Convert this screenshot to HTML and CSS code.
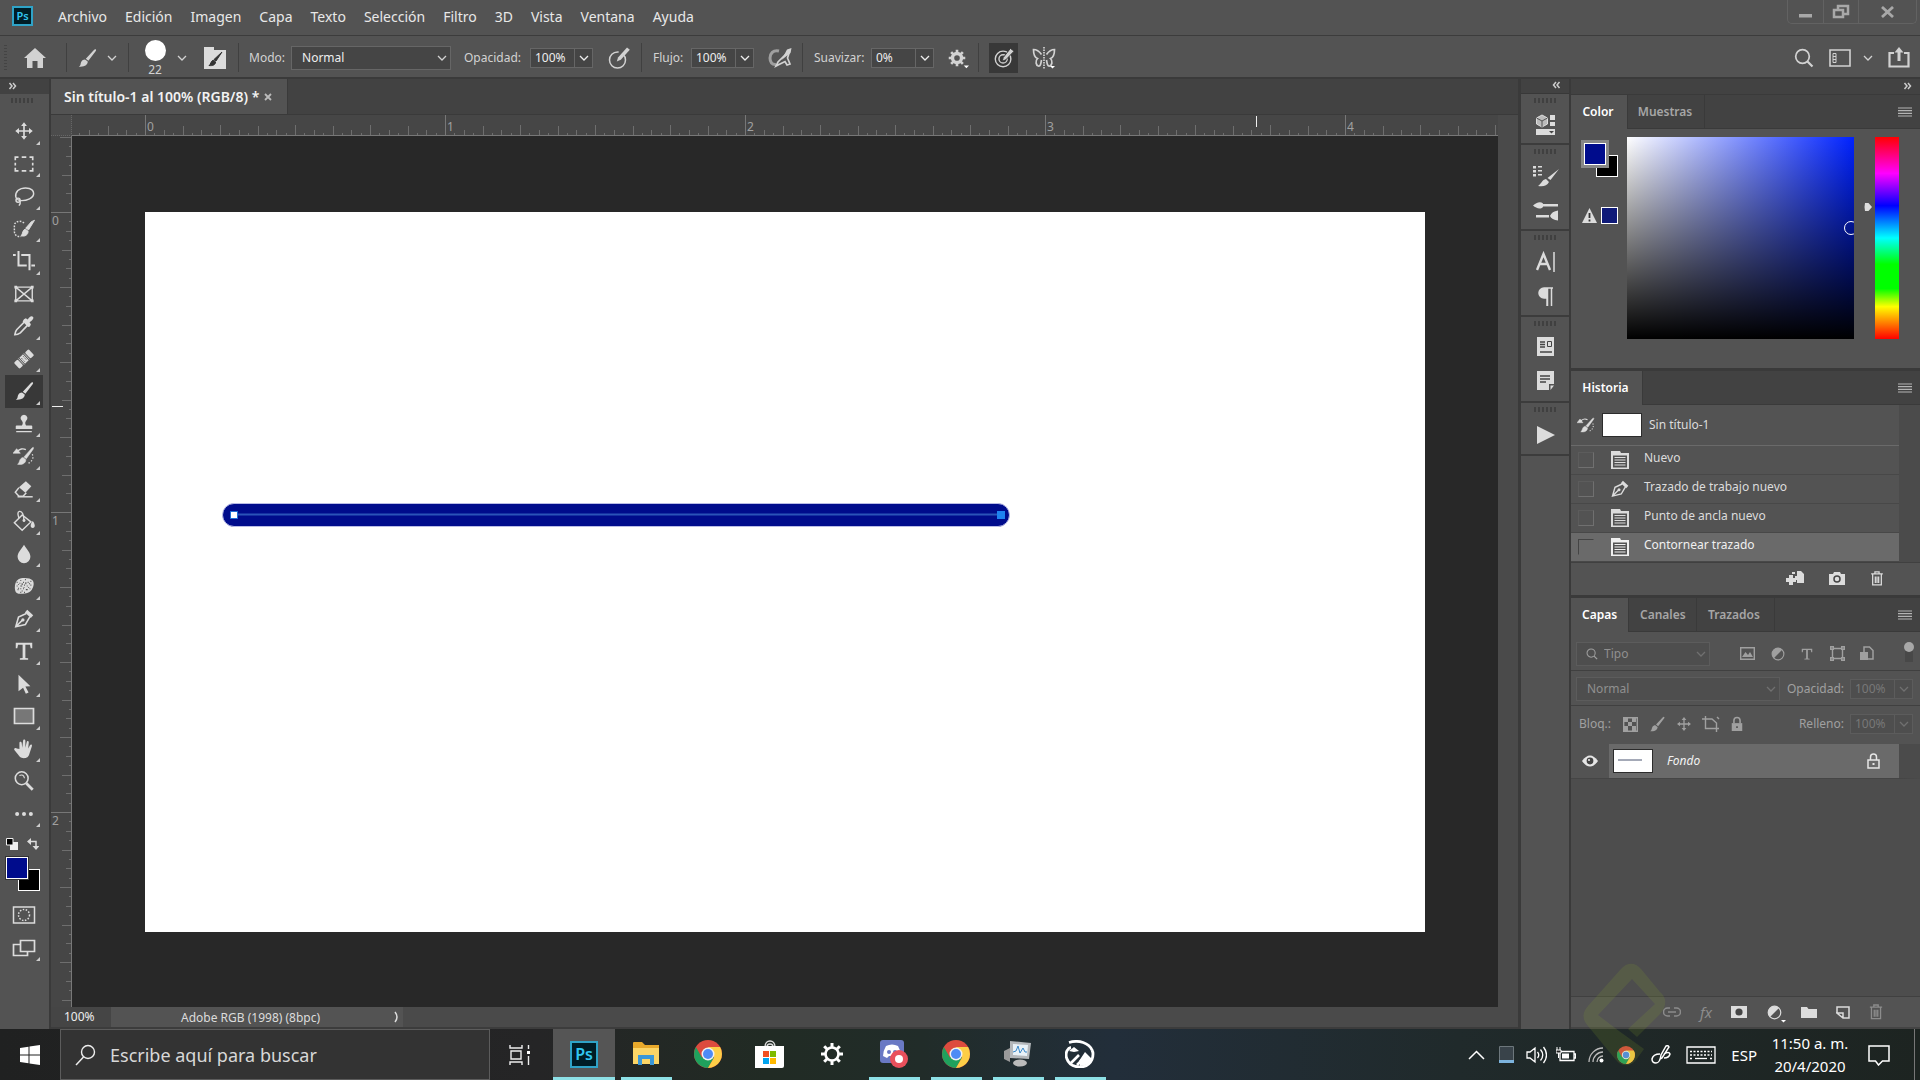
FILE: index.html
```html
<!DOCTYPE html>
<html lang="es">
<head>
<meta charset="utf-8">
<title>Sin título-1 al 100% (RGB/8)</title>
<link rel="stylesheet" href="styles.css">
</head>
<body>
<svg class="sprite" aria-hidden="true">
  <defs>
    <pattern id="ticks-x" x="73" width="75" height="21" patternUnits="userSpaceOnUse">
      <path d="M.5 10V21M9.500 18V21M19.500 15V21M28.500 18V21M38.500 11V21M47.500 18V21M56.500 15V21M66.500 18V21" stroke="#6e6e6e"/>
    </pattern>
    <pattern id="ticks-y" y="76" width="21" height="75" patternUnits="userSpaceOnUse">
      <path d="M9 .5H21M18 9.500H21M15 19.500H21M18 28.500H21M11 38.500H21M18 47.500H21M15 56.500H21M18 66.500H21" stroke="#6e6e6e"/>
    </pattern>
  </defs>
  <symbol id="chev" viewBox="0 0 10 10"><path d="M1 3l4 4 4-4" fill="none" stroke="currentColor" stroke-width="1.300"/></symbol>
  <symbol id="dbl" viewBox="0 0 8 8"><path d="M1 1l2.500 3L1 7M4.500 1L7 4 4.500 7" fill="none" stroke="currentColor" stroke-width="1.500"/></symbol>
  <symbol id="brush" viewBox="0 0 24 24"><path d="M21.500 2.500c.8.6.3 1.500-.1 2.100L13.500 15l-2.800-2.300L19.800 3c.5-.5 1.100-.9 1.700-.5zM9.800 13.500l3 2.400c.2 3.300-3.300 6.300-9.800 5.600 2.500-1.200 1.600-3 2.800-5.400.8-1.700 2.400-2.600 4-2.600z" fill="currentColor"/></symbol>
  <symbol id="move" viewBox="0 0 24 24"><path d="M12 4v16M4 12h16" stroke="currentColor" stroke-width="2"/><path d="M12 1.500l3.500 4.500h-7zM12 22.500L8.500 18h7zM1.500 12L6 8.500v7zM22.500 12L18 15.500v-7z" fill="currentColor"/></symbol>
  <symbol id="marquee" viewBox="0 0 24 24"><path d="M2.500 8V4.500H6M9.500 4.500h5M18 4.500h3.500V8M21.500 10.500v3M21.500 16v3.500H18M14.500 19.500h-5M6 19.500H2.500V16M2.500 13.500v-3" fill="none" stroke="currentColor" stroke-width="1.800"/></symbol>
  <symbol id="lasso" viewBox="0 0 24 24" fill="none" stroke="currentColor" stroke-width="1.600"><path d="M5 16C1 12 3 6 9 4s13 0 13.500 5S15 17.500 8 17"/><circle cx="5.500" cy="16.500" r="2.200"/><path d="M5 16c3 0 4 3 1.500 6.500"/></symbol>
  <symbol id="quick" viewBox="0 0 24 24"><path d="M12 5.500C9 2.500 2 3 1.500 8v7c.5 4.500 4 6 7.500 5" fill="none" stroke="currentColor" stroke-width="1.600" stroke-dasharray="1.800 1.500"/><path d="M23.500 2.500L17 13l-3-2 6-7zM13.500 12l3 2.500c0 4-3.500 6-7.500 5 2-3 1-6 4.500-7.500z" fill="currentColor" stroke="currentColor"/></symbol>
  <symbol id="crop" viewBox="0 0 24 24"><path d="M6 1v16h9M0 5.500h3M9 5.500h9V22M20 17h4" fill="none" stroke="currentColor" stroke-width="2.200"/></symbol>
  <symbol id="frame" viewBox="0 0 24 24"><path d="M3 4.500h18v15H3zM3 4.500l18 15M21 4.500l-18 15" fill="none" stroke="currentColor" stroke-width="1.500"/><path d="M1.500 3h3v3h-3zM19.500 3h3v3h-3zM1.500 18h3v3h-3zM19.500 18h3v3h-3z" fill="currentColor"/></symbol>
  <symbol id="eyedrop" viewBox="0 0 24 24"><path d="M13 7L4 16c-1.500 2-1.500 3-2 5.500C4.500 21.500 6 21 8 19.500l8.500-9" fill="none" stroke="currentColor" stroke-width="1.700"/><path d="M12 4.500l2-1 2 1.500c1.500-2 3-4 5-3.500s2 3-3 6.500l1.500 2-1 2.500-2 .5L10.500 7z" fill="currentColor"/></symbol>
  <symbol id="heal" viewBox="0 0 24 24"><g transform="rotate(-43 12 12)"><rect x="0" y="7" width="6" height="10" rx="1.500" fill="currentColor"/><rect x="18" y="7" width="6" height="10" rx="1.500" fill="currentColor"/><path d="M7.500 7v10M16.500 7v10" stroke="currentColor"/><path d="M9 7h6v10H9z" fill="currentColor"/><path d="M10.500 9v6M13.500 9v6" stroke="#535353" stroke-dasharray="1.500 1"/></g></symbol>
  <symbol id="stamp" viewBox="0 0 24 24"><path d="M12 2a3.800 3.800 0 012 7c-1 1.500-.8 3 .2 4.500H20q1 0 1 1v3H3v-3q0-1 1-1h5.800c1-1.500 1.200-3 .2-4.500A3.800 3.800 0 0112 2zM3.500 19.500h17v1.600h-17z" fill="currentColor"/></symbol>
  <symbol id="histbrush" viewBox="0 0 24 24"><path d="M0 9l4-5 4 5zM22 2.500c1 .5 0 2 0 2L14.500 15l-2.500-2 8.500-9.500zM11 13.500l3 2.500c0 4-4 6-9 5 3-2 1-6 6-7.500z" fill="currentColor" stroke="currentColor" stroke-width=".6"/><path d="M5 7c2-3 6-3.500 9-2" fill="none" stroke="currentColor" stroke-width="1.500"/><path d="M21 10c2 4 0 8-5 10.500" fill="none" stroke="currentColor" stroke-width="1.400" stroke-dasharray="1.500 2"/></symbol>
  <symbol id="eraser" viewBox="0 0 24 24"><path d="M14 3.500l6 5.500-6.500 7-7-6z" fill="currentColor"/><path d="M6.500 10.500L2.500 15.500 6.500 20H11l3.500-4" fill="none" stroke="currentColor" stroke-width="1.600"/><path d="M5 20.500h16.500" stroke="currentColor" stroke-width="1.600"/></symbol>
  <symbol id="bucket" viewBox="0 0 24 24"><path d="M10 5.500L1.500 14 10 22l9.500-9z" fill="none" stroke="currentColor" stroke-width="1.600"/><path d="M12 12.500C12 5 10 1 7 1.500S6 7 6.500 9" fill="none" stroke="currentColor" stroke-width="1.500"/><circle cx="12" cy="11.500" r="1.600" fill="currentColor"/><path d="M21.500 12c3 4 3 7.500 0 7.500s-3-3.500 0-7.500z" fill="currentColor"/></symbol>
  <symbol id="drop" viewBox="0 0 24 24"><path d="M12 2c3 5 7 8.500 7 13a7 7 0 01-14 0c0-4.500 4-8 7-13z" fill="currentColor"/></symbol>
  <symbol id="sponge" viewBox="0 0 24 24"><path d="M6 4.500C9 2.500 19 2.500 21.500 6c2 3 1 7-1 10-2.500 4-9 4.500-13 4.500-4.500 0-5.500-3.500-5.500-7 0-4 1-7 4-9z" fill="currentColor"/><path d="M4 8h1M8 6h1M7 9h1M11 8h1M13 5h1M16 8h1M19 7h1M4 12h1M8 12h2M12 11h1M15 12h1M19 11h1M5 16h1M8 15h1M11 15h1M14 16h2M18 15h1M8 19h1M12 19h1M6 10v1M10 9v2M14 8v2M18 9v1M6 14v1M12 13v1M17 13v1M10 17v1" stroke="#535353" stroke-width="1.200" fill="none"/></symbol>
  <symbol id="pen" viewBox="0 0 24 24"><path d="M14.500 6L6 10 3 20.500 13.500 18l5-8.500M3 20.500l7-7" fill="none" stroke="currentColor" stroke-width="1.700"/><circle cx="10.800" cy="13" r="1.800" fill="currentColor"/><path d="M15.500 2l6.500 6-2.500 3L13 5z" fill="currentColor"/></symbol>
  <symbol id="type" viewBox="0 0 24 24"><path d="M3 3h18v6h-1.700L18.500 5.300h-5v14.200l3 .5v1.500h-9V20l3-.5V5.300h-5L4.700 9H3z" fill="currentColor"/></symbol>
  <symbol id="arrow" viewBox="0 0 24 24"><path d="M6 2l13 12.500-5.500.3 3.500 6.500-3 1.200-3-6.500-5 4z" fill="currentColor"/></symbol>
  <symbol id="rect" viewBox="0 0 24 24"><path d="M2.500 4.500h19v15h-19z" fill="#777" stroke="currentColor" stroke-width="1.700"/></symbol>
  <symbol id="hand" viewBox="0 0 24 24"><path d="M7 12V5.500c0-2 2.300-2 2.500 0l.6 5L11 3c.1-1.900 2.400-1.900 2.500 0v7.500l1.400-6c.3-1.800 2.500-1.500 2.300.5l-.6 6.500 1.900-3.500c1-1.600 2.700-.7 2.100 1L18 17c-1 4-3 5-6 5-4 0-5-2-6.500-4L1.500 13c-.8-1.500 1-2.700 2.500-1.500z" fill="currentColor"/></symbol>
  <symbol id="zoomt" viewBox="0 0 24 24"><circle cx="9.500" cy="9" r="7" fill="none" stroke="currentColor" stroke-width="1.700"/><path d="M7 6c3-1.500 5 0 5.500 3" fill="none" stroke="currentColor" stroke-width="1.200"/><path d="M14.500 14.500l7 7" stroke="currentColor" stroke-width="3"/></symbol>
  <symbol id="dots" viewBox="0 0 24 24" fill="currentColor"><circle cx="4.500" cy="12" r="2.200"/><circle cx="12" cy="12" r="2.200"/><circle cx="19.500" cy="12" r="2.200"/></symbol>
  <symbol id="mask" viewBox="0 0 24 24" fill="none" stroke="currentColor"><path d="M1.500 4h21v16h-21z" stroke-width="1.500"/><circle cx="12" cy="12" r="5.500" stroke-width="1.500" stroke-dasharray="1.500 1.500"/></symbol>
  <symbol id="screens" viewBox="0 0 24 24"><path d="M1.500 8.500h14v11h-14z" fill="none" stroke="currentColor" stroke-width="1.700"/><path d="M8.500 4.500h14v11h-14z" fill="#535353" stroke="currentColor" stroke-width="1.700"/></symbol>
  <symbol id="search" viewBox="0 0 20 20"><circle cx="8.500" cy="8.500" r="6.800" fill="none" stroke="currentColor" stroke-width="1.700"/><path d="M13.500 13.500l5 5" stroke="currentColor" stroke-width="2.200"/></symbol>
  <symbol id="penring" viewBox="0 0 24 24"><circle cx="10.500" cy="14" r="8" fill="none" stroke="currentColor" stroke-width="1.500"/><path d="M13 3.500l-5 10-1 4 3.500-1.500 8-8z" fill="#535353"/><path d="M20 1.500l2.800 2.300-9 10-4 1.700 1.200-4z" fill="currentColor"/></symbol>
  <symbol id="target" viewBox="0 0 24 24"><circle cx="11" cy="13" r="8.500" fill="none" stroke="currentColor" stroke-width="1.500"/><circle cx="11" cy="13" r="4.500" fill="none" stroke="currentColor" stroke-width="1.500"/><path d="M19 1.500l4 3-9 9.500-4 1.500 1.200-4z" fill="currentColor" stroke="#383838"/></symbol>
  <symbol id="air" viewBox="0 0 24 24"><path d="M11 5C5 3.500 2 8 2 12s2 7 6 6.500" fill="none" stroke="currentColor" stroke-width="3" opacity=".6"/><path d="M22 4L10 16l-2 4 5-2.500 4-2 2 3.500 3-1-2.500-6z" fill="#535353" stroke="currentColor" stroke-width="1.700"/><path d="M19 3.500L23.500 2 22.500 7l-9 7z" fill="currentColor"/></symbol>
  <symbol id="gear" viewBox="0 0 24 24"><circle cx="12" cy="12" r="6" fill="none" stroke="currentColor" stroke-width="4.500"/><path d="M12 1v4M12 19v4M1 12h4M19 12h4M4.200 4.200l3 3M16.800 16.800l3 3M4.200 19.800l3-3M16.800 7.200l3-3" stroke="currentColor" stroke-width="3.500"/><path d="M21 22h7l-3.500 3.500z" fill="#fff"/></symbol>
  <symbol id="cog" viewBox="0 0 24 24"><circle cx="12" cy="12" r="6.500" fill="none" stroke="currentColor" stroke-width="2.600"/><path d="M12 1v4M12 19v4M1 12h4M19 12h4M4.200 4.200l3 3M16.800 16.800l3 3M4.200 19.800l3-3M16.800 7.200l3-3" stroke="currentColor" stroke-width="3"/></symbol>
  <symbol id="butterfly" viewBox="0 0 24 24" fill="none" stroke="currentColor" stroke-width="1.700"><path d="M9.500 8.500C7 5 4 3.500 1.500 3.500c0 4 1 8 4 9-2.500 2.500-1.500 7 .8 7.500s2.700-3 3.200-6M14.500 8.500C17 5 20 3.500 22.500 3.500c0 4-1 8-4 9 2.500 2.500 1.500 7-.8 7.500s-2.700-3-3.200-6"/><path d="M12 1v22" stroke-dasharray="1.500 1"/><path d="M18 20h5l-2.500 2.500z" fill="#fff" stroke="none"/></symbol>
  <symbol id="page" viewBox="0 0 20 20"><path d="M1 1h9l1 2h8v16H1z" fill="currentColor"/><path d="M3 5.500h14v12H3z" fill="#535353"/><path d="M4.500 7.500h11M4.500 10h11M4.500 12.500h11M4.500 15h11" stroke="currentColor" stroke-width="1.200"/></symbol>
  <symbol id="trash" viewBox="0 0 16 18"><path d="M1 3.500h14M5.500 3V1h5v2M2.800 4v12.500h10.400V4M6 6.500v8M8 6.500v8M10 6.500v8" fill="none" stroke="currentColor" stroke-width="1.500"/></symbol>
  <symbol id="half" viewBox="0 0 16 16"><circle cx="8" cy="8" r="6.700" fill="none" stroke="currentColor" stroke-width="1.300"/><path d="M12.800 3.200A6.700 6.700 0 003.200 12.800z" fill="currentColor"/></symbol>
  <symbol id="lock" viewBox="0 0 16 18"><path d="M2 8h12v9H2z" fill="currentColor"/><path d="M4.500 8V5a3.500 3.500 0 017 0v3" fill="none" stroke="currentColor" stroke-width="1.800"/><path d="M7 11.500h2v2H7z" fill="#535353"/></symbol>
  <symbol id="menu" viewBox="0 0 14 10"><path d="M0 1h14M0 3.700h14M0 6.300h14M0 9h14" stroke="currentColor" stroke-width="1.200"/></symbol>
  <symbol id="chrome" viewBox="0 0 28 28"><circle cx="14" cy="14" r="14" fill="#dd4b3e"/><path d="M14 14L7.900 17.500 1.900 7A14 14 0 0014 28l6-10.500z" fill="#1fa15d"/><path d="M14 28a14 14 0 0012.100-21H14l6.100 10.500z" fill="#fdce47"/><circle cx="14" cy="14" r="6.500" fill="#f1f1f1"/><circle cx="14" cy="14" r="5" fill="#4e8bf5"/></symbol>
</svg>

<div class="app">
  <header class="menubar">
    <span class="ps ps-small">Ps</span>
    <nav class="menus">
      <button>Archivo</button><button>Edición</button><button>Imagen</button><button>Capa</button><button>Texto</button><button>Selección</button><button>Filtro</button><button>3D</button><button>Vista</button><button>Ventana</button><button>Ayuda</button>
    </nav>
    <div class="winbtns">
      <button aria-label="Minimizar"><svg width="14" height="12"><path d="M0 8h13v3.500H0z" fill="currentColor"/></svg></button>
      <button aria-label="Restaurar"><svg width="18" height="16" fill="none" stroke="currentColor" stroke-width="2.500"><path d="M6 6V2h10v8h-4M2 6h9v7H2z"/></svg></button>
      <button aria-label="Cerrar"><svg width="14" height="12"><path d="M1 1l11 10M12 1L1 11" stroke="currentColor" stroke-width="2.800"/></svg></button>
    </div>
  </header>

  <div class="options">
    <span class="vgrip"></span>
    <button class="opt-home" aria-label="Inicio"><svg width="22" height="20"><path d="M11 0l11 10h-3v10h-5.500v-7h-5v7H3V10H0z" fill="currentColor"/></svg></button>
    <div class="opt-tool"><svg class="i22"><use href="#brush"/></svg><svg class="chev"><use href="#chev"/></svg></div>
    <div class="opt-size"><div class="tip"><span class="dot"></span><span>22</span></div><svg class="chev"><use href="#chev"/></svg>
      <button aria-label="Ajustes de pincel"><svg width="23" height="23"><path d="M1 1h10v3h12v19H1z" fill="#dcdcdc"/><path d="M19 6l-6 9-2-1.500zM10.500 14l2 2c0 3-3 4-6.500 3.500 2-1 1.500-4.500 4.500-5.500z" fill="#333" stroke="#333"/></svg></button></div>
    <div class="opt-mode"><label for="mode">Modo:</label><span class="sel"><select id="mode"><option>Normal</option></select><svg class="chev"><use href="#chev"/></svg></span></div>
    <div class="opt-group g-op"><label for="op">Opacidad:</label><span class="num"><input id="op" value="100%"><button aria-label="Abrir opacidad"><svg class="chev"><use href="#chev"/></svg></button></span><svg class="i24"><use href="#penring"/></svg></div>
    <div class="opt-group g-fl"><label for="fl">Flujo:</label><span class="num"><input id="fl" value="100%"><button aria-label="Abrir flujo"><svg class="chev"><use href="#chev"/></svg></button></span><svg class="i24"><use href="#air"/></svg></div>
    <div class="opt-group g-sm"><label for="sm">Suavizar:</label><span class="num"><input id="sm" value="0%"><button aria-label="Abrir suavizado"><svg class="chev"><use href="#chev"/></svg></button></span><svg class="i18 spill"><use class="spill" href="#gear"/></svg></div>
    <div class="opt-end"><button class="on" aria-label="Presión"><svg class="i22"><use href="#target"/></svg></button><button aria-label="Simetría"><svg class="i24"><use href="#butterfly"/></svg></button></div>
    <div class="opt-right">
      <svg class="i20"><use href="#search"/></svg>
      <svg width="22" height="18" fill="none" stroke="currentColor"><path d="M1 1h20v16H1z" stroke-width="1.600"/><path d="M4 4.500h3v9H4zM4 7.500h3M4 10.500h3"/></svg>
      <svg class="chev"><use href="#chev"/></svg>
      <svg width="22" height="21"><path d="M6 6H1.500v13.500h19V6H16" fill="none" stroke="currentColor" stroke-width="2.200"/><path d="M11 14V4" stroke="currentColor" stroke-width="3"/><path d="M6.500 5.500L11 0l4.500 5.500z" fill="currentColor"/></svg>
    </div>
  </div>

  <main class="work">
    <aside class="tools">
      <div class="strip"><svg width="9" height="8"><use href="#dbl"/></svg></div>
      <span class="hgrip"></span>
      <div class="toollist">
        <button aria-label="Mover"><svg class="i20"><use href="#move"/></svg></button>
        <button aria-label="Marco"><svg class="i22"><use href="#marquee"/></svg></button>
        <button aria-label="Lazo"><svg class="i22"><use href="#lasso"/></svg></button>
        <button aria-label="Selección rápida"><svg class="i22"><use href="#quick"/></svg></button>
        <button aria-label="Recortar"><svg class="i22"><use href="#crop"/></svg></button>
        <button class="plain" aria-label="Fotograma"><svg class="i22"><use href="#frame"/></svg></button>
        <button aria-label="Cuentagotas"><svg class="i22"><use href="#eyedrop"/></svg></button>
        <button aria-label="Corrector"><svg class="i20"><use href="#heal"/></svg></button>
        <button class="on" aria-label="Pincel"><svg class="i22"><use href="#brush"/></svg></button>
        <button aria-label="Tampón"><svg class="i22"><use href="#stamp"/></svg></button>
        <button aria-label="Pincel de historia"><svg class="i22"><use href="#histbrush"/></svg></button>
        <button aria-label="Borrador"><svg class="i22"><use href="#eraser"/></svg></button>
        <button aria-label="Bote de pintura"><svg class="i22"><use href="#bucket"/></svg></button>
        <button aria-label="Desenfocar"><svg class="i22"><use href="#drop"/></svg></button>
        <button aria-label="Esponja"><svg class="i22"><use href="#sponge"/></svg></button>
        <button aria-label="Pluma"><svg class="i22"><use href="#pen"/></svg></button>
        <button aria-label="Texto"><svg class="i22"><use href="#type"/></svg></button>
        <button aria-label="Selección de trazado"><svg class="i22"><use href="#arrow"/></svg></button>
        <button aria-label="Rectángulo"><svg class="i24"><use href="#rect"/></svg></button>
        <button aria-label="Mano"><svg class="i22"><use href="#hand"/></svg></button>
        <button class="plain" aria-label="Zoom"><svg class="i22"><use href="#zoomt"/></svg></button>
        <button aria-label="Editar barra"><svg class="i22"><use href="#dots"/></svg></button>
      </div>
      <div class="mini"><svg width="12" height="12"><path d="M4 4h8v8H4z" fill="#eee"/><path d="M.5.5h6.500v6.500H.5z" fill="#000" stroke="#eee"/></svg><svg width="12" height="12"><path d="M2 3.500h7V11" fill="none" stroke="#dcdcdc" stroke-width="1.500"/><path d="M0 3.500L4 0v7zM9 12L5.500 8h7z" fill="#dcdcdc"/></svg></div>
      <div class="swatches"><span class="bg"></span><span class="fg"></span></div>
      <div class="modes"><button class="plain" aria-label="Máscara rápida"><svg class="i24"><use href="#mask"/></svg></button><button aria-label="Modo de pantalla"><svg class="i24"><use href="#screens"/></svg></button></div>
    </aside>

    <section class="doc">
      <div class="tabs"><div class="tab">Sin título-1 al 100% (RGB/8) * <button aria-label="Cerrar documento"><svg width="8" height="8"><path d="M1 1l6 6M7 1L1 7" stroke="currentColor" stroke-width="1.800"/></svg></button></div></div>
      <div class="grid">
        <span class="corner"></span>
        <svg class="ruler-x" width="100%" height="21"><rect width="100%" height="21" fill="url(#ticks-x)"/><path d="M73.500 0V21M373.500 0V21M673.500 0V21M973.500 0V21M1273.500 0V21" stroke="#777"/><path d="M1184.500 1V12" stroke="#eee"/><g fill="#a0a0a0"><text x="75" y="16">0</text><text x="375" y="16">1</text><text x="675" y="16">2</text><text x="975" y="16">3</text><text x="1275" y="16">4</text></g></svg>
        <span class="side"></span>
        <svg class="ruler-y" width="21" height="100%"><rect width="21" height="100%" fill="url(#ticks-y)"/><path d="M0 76.500H21M0 376.500H21M0 676.500H21" stroke="#777"/><path d="M1 270.500H12" stroke="#eee"/><g fill="#a0a0a0"><text x="1" y="89">0</text><text x="1" y="389">1</text><text x="1" y="689">2</text></g></svg>
        <div class="pane">
          <svg class="artboard" width="1280" height="720"><rect width="1280" height="720" fill="#fff"/><rect x="77.500" y="291.500" width="787" height="23" rx="11.500" fill="#000c8c" stroke="#b9bce6"/><path d="M92 302.500H854" stroke="#2a54b8" stroke-width="2"/><path d="M85.500 299.500h7v7h-7z" fill="#fff" stroke="#1d6fd8"/><path d="M852 299h8v8h-8z" fill="#1e82f0"/></svg>
        </div>
        <span class="side"></span>
      </div>
      <footer class="status"><span class="pct">100%</span><span class="profile">Adobe RGB (1998) (8bpc)</span><button aria-label="Más información"><svg width="6" height="12"><path d="M1 1q4 5 0 10" fill="none" stroke="currentColor" stroke-width="1.500"/></svg></button></footer>
    </section>

    <aside class="iconbar">
      <div class="strip end"><svg class="flip" width="9" height="8"><use href="#dbl"/></svg></div>
      <div class="ig"><span class="hgrip"></span><svg width="20" height="21"><path d="M6 1l5.500 3v6L6 13 .5 10V4z" fill="#bbb" stroke="#dcdcdc"/><path d="M.5 4L6 7l5.500-3M6 7v6" stroke="#535353" fill="none"/><path d="M14 1h5v5h-5zM14 8h5v4h-5zM0 15h19v6H0z" fill="#dcdcdc"/><path d="M13 17h5l-2.500 2.500z" fill="#444"/></svg></div>
      <div class="ig two"><span class="hgrip"></span><svg width="26" height="22"><path d="M0 1h3v2.500H0zM0 5h3v2.500H0zM0 9h3v2.500H0zM5 1h4v1.500H5zM5 5h4v1.500H5zM5 9h4v1.500H5zM26 4l-8.500 11-3-2zM13 14l3 3c-2 4-6 5-11 4 3-1.500 4-6.500 8-7z" fill="#dcdcdc"/></svg><svg width="26" height="20"><path d="M0 4.500C3 2 7 0 10 2.500V3h15v2.500H10V6C7 9 3 7 0 4.500zM3 14h13v2.500H3zM17 15c1-3 4-5 8-5.500v10c-4-.5-7-2-8-4.500z" fill="#dcdcdc"/></svg></div>
      <div class="ig two"><span class="hgrip"></span><svg width="20" height="22"><path d="M1 19L7.500 3 14 19M3.500 13h8" fill="none" stroke="#dcdcdc" stroke-width="2.400"/><path d="M18 1v20" stroke="#dcdcdc" stroke-width="1.500"/></svg><svg width="16" height="20"><path d="M15 1H6a5 5 0 000 10h3v8M9.500 1v18M13.500 1v18" fill="none" stroke="#dcdcdc" stroke-width="1.500"/><path d="M9 1H6a5 5 0 000 10h3z" fill="#dcdcdc"/></svg></div>
      <div class="ig two"><span class="hgrip"></span><svg width="18" height="20"><path d="M0 0h17v19H0z" fill="#dcdcdc"/><path d="M3 5h5M3 7.500h5M3 10h5M3 15h12" stroke="#444" stroke-width="1.400"/><path d="M10.500 4.500h4v5h-4z" fill="none" stroke="#444"/></svg><svg width="18" height="20"><path d="M0 0h17v13h-5v6H0zM13.500 14.500H17L13.500 19z" fill="#dcdcdc"/><path d="M3 5h10M3 8h10M3 11h6" stroke="#444" stroke-width="1.500"/></svg></div>
      <div class="ig last"><span class="hgrip"></span><svg width="18" height="18"><path d="M0 0l18 9-18 9z" fill="#dcdcdc"/></svg></div>
    </aside>

    <aside class="dock">
      <div class="strip end"><svg width="9" height="8"><use href="#dbl"/></svg></div>
      <section class="panel color">
        <div class="ptabs"><button class="act">Color</button><button>Muestras</button><svg class="menu"><use href="#menu"/></svg></div>
        <div class="picker">
          <div class="pcol">
            <div class="swatches framed"><span class="bg"></span><span class="fg"></span></div>
            <div class="warn"><svg width="15" height="15"><path d="M7.500 0L15 15H0z" fill="#dcdcdc"/><path d="M7.500 5v5M7.500 11.500v2" stroke="#333" stroke-width="1.800"/></svg><span></span></div>
          </div>
          <div class="field"><span class="knob"></span></div>
          <div class="huewrap"><svg width="9" height="10"><path d="M1 1h3.500L8 5 4.500 9H1Q0 5 1 1z" fill="#ddd"/></svg><span class="hue"></span></div>
        </div>
      </section>

      <section class="panel history">
        <div class="ptabs"><button class="act">Historia</button><svg class="menu"><use href="#menu"/></svg></div>
        <div class="hbody">
          <div class="hsnap"><svg class="i18"><use href="#histbrush"/></svg><span class="thumb"></span><span>Sin título-1</span></div>
          <div class="hrow"><input type="checkbox" aria-label="Nuevo"><svg class="i20"><use href="#page"/></svg><span>Nuevo</span></div>
          <div class="hrow"><input type="checkbox" aria-label="Trazado de trabajo nuevo"><svg class="i20"><use href="#pen"/></svg><span>Trazado de trabajo nuevo</span></div>
          <div class="hrow"><input type="checkbox" aria-label="Punto de ancla nuevo"><svg class="i20"><use href="#page"/></svg><span>Punto de ancla nuevo</span></div>
          <div class="hrow cur"><input type="checkbox" aria-label="Contornear trazado"><svg class="i20"><use href="#page"/></svg><span>Contornear trazado</span></div>
        </div>
        <div class="hfoot"><svg width="18" height="14"><path d="M0 7h3V4h4v3h3v4H7v3H3v-3H0zM6 1h3v2H6zM11 0h4l3 3v9h-7V9H9V5h2z" fill="#dcdcdc"/></svg><svg width="16" height="13"><path d="M0 2h4l1-2h6l1 2h4v11H0z" fill="#dcdcdc"/><circle cx="8" cy="7" r="3" fill="none" stroke="#444" stroke-width="1.500"/></svg><svg width="14" height="15"><use href="#trash"/></svg></div>
      </section>

      <section class="panel layers">
        <div class="ptabs"><button class="act">Capas</button><button class="w68">Canales</button><button class="w78">Trazados</button><svg class="menu"><use href="#menu"/></svg></div>
        <div class="filter">
          <span class="sel dim"><svg class="glass"><use href="#search"/></svg><select aria-label="Tipo" class="w-type"><option>Tipo</option></select><svg class="chev"><use href="#chev"/></svg></span>
          <div class="ficons">
            <svg width="15" height="13"><path d="M.7.7h13.600v11.600H.7z" fill="none" stroke="currentColor" stroke-width="1.400"/><path d="M2 10l3.500-5L8 8l2-3 3 5z" fill="currentColor"/></svg>
            <svg width="14" height="14"><use href="#half"/></svg>
            <svg width="14" height="14"><use href="#type"/></svg>
            <svg width="15" height="15"><path d="M2.500 2.500h10v10h-10z" fill="none" stroke="currentColor" stroke-width="1.400"/><path d="M0 0h4v4H0zM11 0h4v4h-4zM0 11h4v4H0zM11 11h4v4h-4z" fill="currentColor"/><path d="M1.500 1.500h1v1h-1zM12.500 1.500h1v1h-1zM1.500 12.500h1v1h-1zM12.500 12.500h1v1h-1z" fill="#535353"/></svg>
            <svg width="14" height="15"><path d="M4 6V1h5.500L13 4.500V13H8" fill="none" stroke="currentColor" stroke-width="1.500"/><path d="M0 6h8v8H0z" fill="currentColor"/></svg>
          </div>
          <svg width="12" height="22"><path d="M2 8h8v13H2z" fill="#484848"/><circle cx="6" cy="6" r="5" fill="#a8a8a8"/></svg>
        </div>
        <div class="blend"><span class="sel dim"><select aria-label="Modo de fusión" class="w-blend"><option>Normal</option></select><svg class="chev"><use href="#chev"/></svg></span><label for="lop">Opacidad:</label><span class="num dim"><input id="lop" value="100%"><button aria-label="Abrir opacidad de capa"><svg class="chev"><use href="#chev"/></svg></button></span></div>
        <div class="locks"><span>Bloq.:</span>
          <div class="licons">
            <svg width="15" height="15"><path d="M.7.7h13.600v13.600H.7z" fill="none" stroke="currentColor" stroke-width="1.400"/><path d="M1 1h4v4H1zM9 1h4v4H9zM5 5h4v4H5zM1 9h4v5H1zM9 9h4v5H9z" fill="currentColor"/></svg>
            <svg width="18" height="18"><use href="#brush"/></svg>
            <svg width="16" height="16"><use href="#move"/></svg>
            <svg width="18" height="16"><path d="M3.500 0v12.500H17M0 3h10l4.500 4v9M15 1l2 2" fill="none" stroke="currentColor" stroke-width="1.400"/></svg>
            <svg width="14" height="16"><use href="#lock"/></svg>
          </div>
          <label for="fill">Relleno:</label><span class="num dim"><input id="fill" value="100%"><button aria-label="Abrir relleno"><svg class="chev"><use href="#chev"/></svg></button></span></div>
        <div class="layer"><span class="eye"><svg width="16" height="12"><path d="M0 6q8-11 16 0-8 11-16 0z" fill="#e6e6e6"/><circle cx="8" cy="6" r="3.400" fill="#444"/><circle cx="7" cy="5" r="1" fill="#eee"/></svg></span><div class="lbody"><span class="thumb"><svg width="24" height="2"><path d="M0 1h24" stroke="#4a5570"/></svg></span><em>Fondo</em><svg width="14" height="16"><path d="M1 7h11v8H1zM3.500 7V4a3 3 0 016 0v3" fill="none" stroke="#e6e6e6" stroke-width="1.500"/><path d="M5.500 10h2v2h-2z" fill="#e6e6e6"/></svg></div></div>
        <div class="empty"></div>
        <div class="lfoot">
          <svg class="off" width="18" height="10" fill="none" stroke="currentColor" stroke-width="1.500"><path d="M7 1H4.500a4 4 0 000 8H7M11 1h2.500a4 4 0 010 8H11M5 5h8"/></svg>
          <em class="off">fx</em>
          <svg width="17" height="13"><path d="M0 0h16v12H0z" fill="currentColor"/><circle cx="8" cy="6" r="3.600" fill="#444"/></svg>
          <svg class="spill" width="15" height="15"><use href="#half"/><path d="M14 15h5l-2.500 2.500z" fill="#fff"/></svg>
          <svg width="16" height="13"><path d="M0 1h6l1.500 2H16v9H0z" fill="currentColor"/></svg>
          <svg width="14" height="13"><path d="M1 7V1h12v11H7L1 7h6v5" fill="none" stroke="currentColor" stroke-width="1.500"/></svg>
          <svg class="off" width="14" height="16"><use href="#trash"/></svg>
        </div>
      </section>
    </aside>
  </main>

  <footer class="taskbar">
    <button class="start" aria-label="Inicio de Windows"><svg width="20" height="20"><path d="M0 3l8.500-1.200V9.500H0zM9.500 1.600L20 0v9.500H9.500zM0 10.500h8.500v7.700L0 17zM9.500 10.500H20V20L9.500 18.400z" fill="#fff"/></svg></button>
    <label class="find"><svg width="22" height="22"><circle cx="13" cy="8" r="6.500" fill="none" stroke="#eee" stroke-width="1.400"/><path d="M8.500 13L1 21" stroke="#eee" stroke-width="1.500"/></svg><input aria-label="Buscar" placeholder="Escribe aquí para buscar"></label>
    <button class="view" aria-label="Vista de tareas"><svg width="22" height="20" fill="none" stroke="#eee" stroke-width="1.400"><path d="M1 0v3h12V0M1 20v-3h12v3M2 6h10v8H2zM19.500 0v4M19.500 11v9"/><path d="M18 6h3v3h-3z" fill="#fff" stroke="none"/></svg></button>
    <div class="apps">
      <button class="focus run" aria-label="Photoshop"><span class="ps ps-big">Ps</span></button>
      <button class="run" aria-label="Explorador"><svg width="28" height="26"><path d="M1 4V2q0-1 1-1h8l3 3h14v19H1z" fill="#e9a92b"/><path d="M1 7h26v16H1z" fill="#fcd566"/><path d="M6 24V14h16v10h-4v-6h-8v6z" fill="#3b97d8"/></svg></button>
      <button aria-label="Chrome"><svg width="28" height="28"><use href="#chrome"/></svg></button>
      <button aria-label="Tienda"><svg width="30" height="30"><path d="M10 8C10 0 20 0 20 8M12 8c0-4 6-4 6 0" fill="none" stroke="#ddd" stroke-width="1.500"/><path d="M0 7h29v20q0 2-2 2H0z" fill="#fff"/><path d="M8 12h6v6H8z" fill="#f05022"/><path d="M15 12h6v6h-6z" fill="#7fba00"/><path d="M8 19h6v6H8z" fill="#00a4ef"/><path d="M15 19h6v6h-6z" fill="#ffb900"/></svg></button>
      <button aria-label="Configuración"><svg class="i24"><use href="#cog"/></svg></button>
      <button class="run" aria-label="Discord"><svg width="28" height="28"><rect width="24" height="23" rx="3" fill="#6a79c4"/><path d="M6 6q6-3 12 0 3 5 3 10l-4 2-2-2H9l-2 2-4-2q0-5 3-10z" fill="#fff"/><circle cx="9" cy="12" r="2" fill="#6a79c4"/><circle cx="15" cy="12" r="2" fill="#6a79c4"/><circle cx="19" cy="19" r="9" fill="#e9505c"/><circle cx="19" cy="19" r="4" fill="#fff"/></svg></button>
      <button class="run" aria-label="Chrome, ventana"><svg width="28" height="28"><use href="#chrome"/></svg></button>
      <button class="run" aria-label="Monitor"><svg width="28" height="26"><path d="M0 10l6-3v14l-6-3z" fill="#999"/><ellipse cx="16" cy="22" rx="7" ry="3.500" fill="#bbb"/><path d="M6 0l21 2-2 16-19-1z" fill="#b4b8bc"/><path d="M9 3l15 1-1 11-14-1z" fill="#e8f1f8"/><path d="M9 11l3-1 2-5 2 7 3-5 2 4h2" fill="none" stroke="#3a88c8"/></svg></button>
      <button class="run" aria-label="Fotos"><svg width="30" height="28"><path d="M4 2.500C14-.5 24 3 27 10M1.500 18C0 12 3 8 6 7.500M1.500 18C4 25 9 27 15 27s13-4 13-13c0-2-.5-3-1-4" fill="none" stroke="#fff" stroke-width="2.800"/><path d="M6 23l8-8M12 25l6-6" stroke="#fff" stroke-width="2.600"/><path d="M15 26l-1-5 6-9 7 7q-4 7-12 7zM4 11l5-4 5 4-5 1z" fill="#fff"/></svg></button>
    </div>
    <div class="tray">
      <div class="ticons">
        <svg width="17" height="10"><path d="M1 9l7.500-7.500L16 9" fill="none" stroke="#fff" stroke-width="1.500"/></svg>
        <svg width="15" height="17"><path d="M.5.500h14v16H.5z" fill="#39434a" stroke="#6d777c"/><path d="M0 14h15v3H0z" fill="#7db4de"/></svg>
        <svg width="21" height="18" fill="none" stroke="#fff" stroke-width="1.300"><path d="M1 6h3l5-4v14l-5-4H1zM11.500 6q2.500 3 0 6M14.500 3.500q4.500 5.500 0 11M17.500 1q6 8 0 16"/></svg>
        <svg width="20" height="16"><path d="M4 4.500h14v9H4zM18 7h1.500v4H18" fill="none" stroke="#fff" stroke-width="1.300"/><path d="M6 6.500h7v5H6z" fill="#fff"/><path d="M1 0v3M4 0v3M0 3h5v3H0zM2.500 6v5" stroke="#fff" fill="#222"/></svg>
        <svg width="16" height="16" fill="none" stroke="#bbb" stroke-width="1.300"><path d="M1 15A14 14 0 0115 1M5 15A10 10 0 0115 5M9 15a6 6 0 016-6"/><circle cx="13.500" cy="13.500" r="2" fill="#fff" stroke="none"/></svg>
        <svg width="18" height="18"><use href="#chrome"/></svg>
      </div>
      <svg width="20" height="20" fill="none" stroke="#fff" stroke-width="1.500"><path d="M9 9q-7 0-8 5 0 4 4 4t5-8l5-9q2-1 3 1l-7 11-2 1M13 9q5-3 6 0-1 4-6 4"/></svg>
      <svg width="30" height="18" fill="none" stroke="#fff" stroke-width="1.300"><path d="M1 1h28v16H1z"/><path d="M4 5.500h22M4 9h22M4 12.500h3M24 12.500h2" stroke-dasharray="2 1.500"/><path d="M9 12.500h12"/></svg>
      <span>ESP</span>
      <div class="clock"><span>11:50 a. m.</span><span>20/4/2020</span></div>
      <svg width="22" height="22"><path d="M1 2h20v15h-6.500l-4 4-3-4H1z" fill="none" stroke="#fff" stroke-width="1.500"/></svg>
      <span class="desk"></span>
    </div>
  </footer>
  <svg class="mark" viewBox="0 0 90 106" aria-hidden="true"><path d="M55 76L78 53c7-8 7-16 0-22L59 8c-6-7-14-7-20 0L6 45c-6 7-6 13 0 20l28 34c5 7 15 7 20 0l8-11L37 70 16 54 50 18 73 43 46 68z" fill="#8aa52c" fill-opacity=".16"/></svg>
</div>
</body>
</html>
```
FILE: styles.css
```css
* { box-sizing: border-box; }
body { margin: 0; background: #282828; color: #dcdcdc; font: 13px/18px "Noto Sans", sans-serif; }
button, input, select { font: inherit; color: inherit; background: none; border: 0; padding: 0; margin: 0; border-radius: 0; outline: 0; }
button { display: flex; align-items: center; justify-content: center; }
select { appearance: none; }
svg { display: block; flex: none; }
.sprite { position: absolute; width: 0; height: 0; }
.i18 { width: 18px; height: 18px; }
.i20 { width: 20px; height: 20px; }
.i22 { width: 22px; height: 22px; }
.i24 { width: 24px; height: 24px; }
.chev { width: 10px; height: 10px; }
.spill, #gear { overflow: visible; }
.flip { transform: rotate(180deg); }

.app { display: flex; flex-direction: column; height: 100vh; overflow: hidden; position: relative; }

/* Menu bar */
.menubar { display: flex; height: 36px; background: #535353; border-bottom: 1px solid #3c3c3c; padding-left: 12px; flex: none; }
.ps { display: flex; align-items: center; justify-content: center; background: #001d26; border: 2px solid #2fa3c7; color: #31c5f0; font-weight: 600; }
.ps-small { width: 21px; height: 20px; margin-top: 6px; font-size: 11px; }
.ps-big { width: 28px; height: 27px; font-size: 16px; }
.menus { display: flex; gap: 18px; padding: 0 0 2px 25px; font-size: 14px; color: #e8e8e8; }
.winbtns { display: flex; margin-left: auto; margin-right: 3px; height: 24px; color: #a8a8a8; border: 1px solid #626262; border-top: 0; border-radius: 0 0 5px 5px; }
.winbtns button { width: 35px; }
.winbtns button + button { border-left: 1px solid #626262; }
.winbtns button:last-child { width: 58px; }

/* Options bar */
.options { display: flex; height: 43px; padding-top: 2px; align-items: center; background: #535353; border-bottom: 2px solid #3a3a3a; flex: none; color: #d2d2d2; font-size: 12px; }
.options > div { display: flex; align-items: center; height: 29px; }
.vgrip { width: 3px; height: 26px; margin: 0 16px 0 4px; background: repeating-linear-gradient(#444 0 1px, transparent 1px 3px); }
.opt-home { width: 24px; margin-right: 19px; }
.opt-tool { border-left: 1px solid #404040; width: 62px; padding-left: 9px; gap: 9px; }
.opt-size { border-left: 1px solid #404040; width: 110px; padding-left: 14px; }
.opt-size .chev { margin: 0 16px 0 10px; }
.tip { display: flex; flex-direction: column; align-items: center; width: 24px; font-size: 12px; line-height: 14px; gap: 2px; padding-top: 2px; }
.dot { width: 21px; height: 21px; border-radius: 50%; background: #fff; }
.opt-mode { border-left: 1px solid #404040; width: 226px; padding-left: 10px; gap: 6px; }
.sel { display: grid; align-items: center; }
.sel > * { grid-area: 1 / 1; }
.sel select { width: 160px; height: 24px; padding-left: 10px; background: #454545; border: 1px solid #666; color: #eee; }
.sel .chev { justify-self: end; margin-right: 4px; }
.opt-group { border-right: 1px solid #404040; }
.opt-group > svg { margin-left: 14px; }
.num { display: flex; height: 20px; background: #454545; border: 1px solid #666; color: #eee; }
.num input { width: 43px; padding-left: 4px; }
.num button { width: 18px; border-left: 1px solid #666; }
.g-op { width: 178px; }
.g-op .num, .g-fl .num, .g-sm .num { margin-left: auto; }
.g-fl { width: 161px; padding-left: 11px; }
.g-sm { width: 176px; padding-left: 11px; }
.g-op > svg, .g-fl > svg { margin-right: 10px; }
.g-sm > svg { margin-right: 12px; }
.opt-end { padding-left: 10px; gap: 14px; }
.opt-end .on { width: 29px; height: 30px; background: #383838; }
.opt-right { margin: 0 10px 0 auto; gap: 15px; }
.opt-right .chev { margin-left: -3px; }

/* Work area */
.work { display: flex; flex: 1; min-height: 0; background: #3a3a3a; gap: 2px; }
.strip { display: flex; align-items: center; height: 15px; background: #424242; padding: 0 8px 2px; color: #ccc; flex: none; }
.end { justify-content: flex-end; }
.hgrip { display: block; width: 24px; height: 5px; background: repeating-linear-gradient(90deg, #404040 0 2px, transparent 2px 4px); flex: none; }
.tools { width: 49px; display: flex; flex-direction: column; background: #535353; flex: none; }
.tools > .hgrip { margin: 4px 0 12px 11px; }
.toollist { display: grid; grid-auto-rows: 1fr; height: 715px; flex: none; padding: 0 6px 0 5px; }
.toollist button, .modes button { position: relative; }
.toollist button:not(.plain)::after, .modes button:not(.plain)::after { content: ""; position: absolute; right: 3px; bottom: 3px; border: 2px solid transparent; border-right-color: #ccc; border-bottom-color: #ccc; }
.toollist .on { background: #383838; }
.mini { display: flex; justify-content: space-between; padding: 8px 10px 0 6px; }
.swatches { position: relative; width: 34px; height: 34px; margin: 7px 0 0 6px; }
.swatches span { position: absolute; width: 22px; height: 22px; border: 1px solid #fff; }
.fg { left: 0; top: 0; background: #000c8c; outline: 1px solid #333; }
.bg { right: 0; bottom: 0; background: #000; }
.modes { display: grid; grid-auto-rows: 33px; padding: 7px 6px 0 5px; }

/* Document */
.doc { flex: 1; min-width: 0; display: flex; flex-direction: column; background: #4a4a4a; }
.tabs { height: 36px; background: #424242; flex: none; display: flex; border-bottom: 1px solid #3a3a3a; }
.tab { display: flex; align-items: center; gap: 5px; width: 237px; padding-left: 13px; background: #535353; color: #f2f2f2; font-size: 14px; font-weight: 600; white-space: nowrap; border-right: 1px solid #3a3a3a; }
.tab button { color: #bbb; }
.grid { flex: 1; min-height: 0; display: grid; grid-template: 21px minmax(0, 1fr) / 21px minmax(0, 1fr) 20px; background: #464646; }
.corner { border-right: 1px dotted #666; border-bottom: 1px dotted #666; background: #4c4c4c; }
.side { background: #4a4a4a; }
.ruler-x, .ruler-y { font-size: 12px; }
.ruler-x { border-bottom: 1px solid #777; }
.ruler-y { border-right: 1px solid #777; height: 100%; }
.pane { background: #282828; display: flex; align-items: center; justify-content: center; overflow: hidden; min-width: 0; }
.status { display: flex; height: 22px; flex: none; font-size: 12px; border-bottom: 2px solid #3c3c3c; }
.pct { width: 60px; padding-left: 13px; background: #454545; color: #eee; line-height: 20px; }
.profile { width: 280px; padding: 2px 0 0 70px; background: #535353; }
.status button { width: 12px; background: #535353; }

/* Collapsed panel icons */
.iconbar { width: 48px; background: #535353; flex: none; margin-left: 1px; }
.iconbar .strip { border-bottom: 1px solid #383838; }
.ig { display: flex; flex-direction: column; align-items: center; height: 51px; padding: 4px 0 0 2px; border-bottom: 2px solid #3c3c3c; gap: 11px; }
.two { height: 86px; gap: 14px; }
.two .hgrip { margin-bottom: -3px; }
.last { height: 53px; gap: 14px; }

/* Panel dock */
.dock { width: 349px; display: flex; flex-direction: column; background: #3a3a3a; flex: none; gap: 1px; }
.panel { background: #535353; flex: none; }
.ptabs { display: flex; height: 34px; background: #424242; font-weight: 600; font-size: 12px; color: #a6a6a6; border-bottom: 1px solid #3a3a3a; }
.ptabs button { padding: 0 13px 0 11px; border-right: 1px solid #3a3a3a; }
.ptabs .act { background: #535353; color: #fff; margin-bottom: -1px; }
.menu { width: 14px; height: 10px; margin: 12px 8px 0 auto; color: #b4b4b4; }
.color { height: 273px; margin-bottom: 2px; }
.color .ptabs button:nth-child(2) { width: 77px; }
.color .ptabs .act { width: 57px; }
.picker { display: flex; padding: 8px 21px 0 11px; height: 210px; }
.pcol { width: 45px; }
.framed { margin: 6px 0 0 2px; }
.framed .fg { outline: 3px solid #888; }
.warn { display: flex; align-items: center; gap: 4px; margin-top: 30px; }
.warn span { width: 17px; height: 17px; border: 1px solid #fff; background: #0f1a78; }
.field { position: relative; overflow: hidden; flex: 1; background: linear-gradient(to top, #000, transparent), linear-gradient(to right, #fff, #0022ff); }
.knob { position: absolute; right: -4px; top: 84px; width: 14px; height: 14px; border: 1px solid #fff; border-radius: 50%; }
.huewrap { display: flex; width: 45px; padding-left: 10px; gap: 2px; }
.huewrap svg { margin-top: 65px; }
.hue { flex: 1; background: linear-gradient(#f00, #f0f 18%, #00f 34%, #0ff 50%, #0f0 63%, #0f0 75%, #ff0 84%, #f00); }

.history { display: flex; flex-direction: column; height: 224px; margin-bottom: 2px; font-size: 12px; }
.history .ptabs { width: 100%; flex: none; }
.history .act { width: 72px; }
.hbody { border-right: 21px solid #4b4b4b; height: 157px; }
.hsnap, .hrow { display: flex; align-items: center; }
.hsnap { height: 41px; padding-left: 6px; gap: 7px; border-bottom: 1px solid #6a6a6a; }
.thumb { width: 40px; height: 24px; background: #fff; border: 1px solid #2c2c2c; flex: none; }
.hrow { height: 29px; padding-left: 7px; border-bottom: 1px solid #484848; }
.hrow input { appearance: none; width: 16px; height: 16px; border: 1px solid #5c5c5c; border-right-color: #707070; border-bottom-color: #707070; }
.hrow svg { margin-left: 16px; }
.hrow span { margin: 0 0 5px 14px; }
.cur { background: #6a6a6a; color: #f0f0f0; }
.cur input { border-color: #444 #6a6a6a #6a6a6a #444; }
.hfoot { flex: 1; display: flex; align-items: center; justify-content: flex-end; gap: 25px; padding: 0 36px 2px 0; border-top: 1px solid #404040; }

.layers { flex: 1; display: flex; flex-direction: column; color: #a0a0a0; min-height: 0; font-size: 12px; }
.layers .ptabs { flex: none; }
.layers .ptabs button { justify-content: flex-start; padding: 0 0 0 11px; }
.layers .act { width: 58px; }
.w68 { width: 68px; }
.w78 { width: 78px; }
.filter, .blend, .locks { display: flex; align-items: center; flex: none; }
.filter { height: 39px; padding: 5px 5px 0; border-bottom: 1px solid #404040; }
.filter > svg { margin-bottom: 4px; }
.sel.dim select { background: #4e4e4e; border-color: #5c5c5c; color: #909090; }
.sel.dim .chev, .num.dim .chev { color: #707070; }
.sel.dim .w-type { width: 134px; padding-left: 27px; }
.sel.dim .w-blend { width: 204px; }
.glass { width: 12px; height: 12px; margin-left: 10px; z-index: 1; }
.ficons { display: flex; flex: 1; justify-content: space-between; align-items: center; padding: 0 29px 0 30px; }
.blend { height: 35px; padding: 2px 7px 0 5px; border-bottom: 1px solid #404040; }
.blend label, .locks label { margin: 0 6px 0 auto; }
.num.dim { background: #4e4e4e; border-color: #5c5c5c; color: #787878; }
.num.dim button { border-color: #5c5c5c; }
.locks { height: 38px; padding: 0 7px 2px 8px; }
.licons { display: flex; align-items: center; gap: 10px; margin-left: 12px; }
.layer { display: flex; height: 35px; border-right: 21px solid #4b4b4b; border-bottom: 1px solid #454545; flex: none; }
.eye { width: 38px; display: grid; place-items: center; }
.lbody { flex: 1; display: flex; align-items: center; background: #6a6a6a; color: #f2f2f2; padding: 0 18px 0 4px; }
.lbody em { margin: 0 auto 0 14px; }
.lbody .thumb { padding: 9px 0 0 4px; }
.empty { flex: 1; background: #4d4d4d; border-bottom: 1px solid #404040; }
.lfoot { height: 32px; display: flex; align-items: center; justify-content: flex-end; gap: 19px; padding-right: 37px; color: #dcdcdc; flex: none; border-bottom: 2px solid #444; }
.lfoot .off { color: #8c8c8c; }
.lfoot em { font-size: 15px; }

/* Taskbar */
.taskbar { display: flex; height: 51px; flex: none; align-items: stretch; color: #fff; background: linear-gradient(90deg, #202121, #252526 28%, #212b24 40%, #212c29 48%, #222e3a 58%, #202a2b 76%, #1d2421); }
.start { width: 60px; }
.find { display: flex; align-items: center; gap: 13px; width: 430px; padding-left: 14px; background: #333; border: 1px solid #5c5c5c; }
.find input { flex: 1; font-size: 18px; }
.find input::placeholder { color: #d8d8d8; opacity: 1; }
.view { width: 60px; margin-right: 3px; }
.apps { display: flex; }
.apps button { width: 62px; border-bottom: 3px solid transparent; padding-top: 2px; }
.apps .run { background: linear-gradient(#8de0e6, #8de0e6) center bottom / 51px 3px no-repeat border-box; }
.apps .focus.run { background: linear-gradient(#8de0e6, #8de0e6) center bottom / 62px 3px no-repeat border-box, #555; }
.tray { display: flex; align-items: center; margin-left: auto; gap: 15px; font-size: 15px; }
.ticons { display: grid; grid-template-columns: repeat(6, 30px); place-items: center; margin-right: -5px; }
.clock { display: flex; flex-direction: column; align-items: center; width: 76px; margin-right: 5px; line-height: 23px; white-space: nowrap; }
.desk { width: 6px; height: 51px; border-left: 1px solid #777; margin-left: 9px; }

/* Watermark over the dock and taskbar */
.mark { position: absolute; right: 248px; bottom: 13px; width: 90px; height: 106px; pointer-events: none; }
```
